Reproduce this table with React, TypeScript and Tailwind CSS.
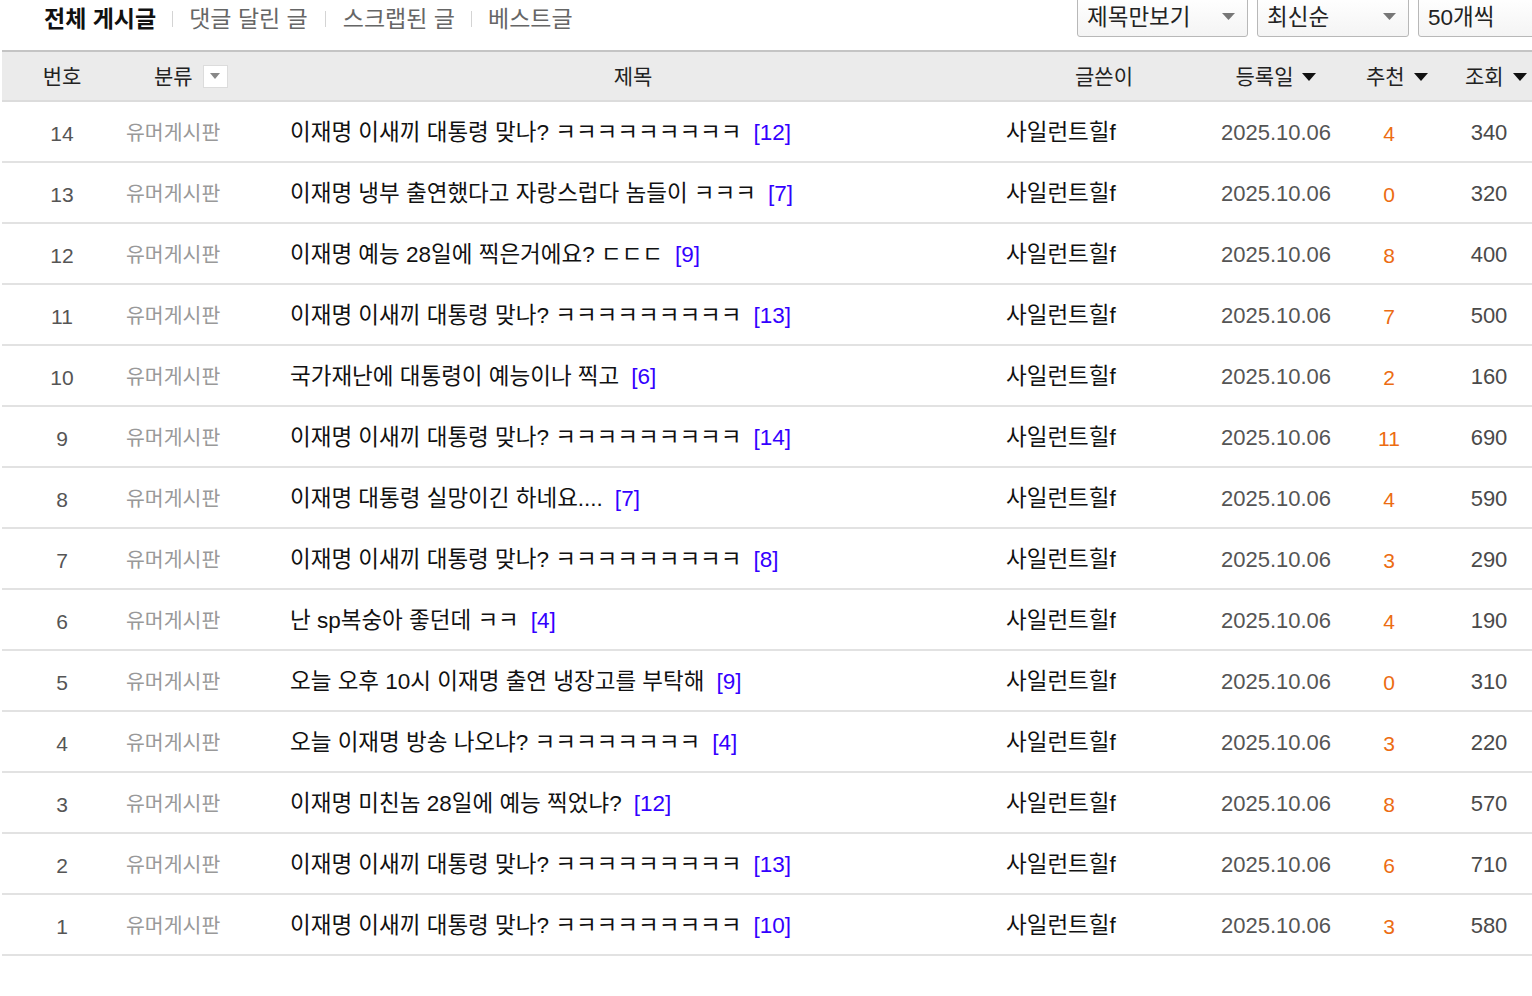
import React from "react";

type Post = { no: number; title: string; comments: number; likes: number; views: number };

const posts: Post[] = [
	{ no: 14, title: "이재명 이새끼 대통령 맞나? ㅋㅋㅋㅋㅋㅋㅋㅋㅋ", comments: 12, likes: 4, views: 340 },
	{ no: 13, title: "이재명 냉부 출연했다고 자랑스럽다 놈들이 ㅋㅋㅋ", comments: 7, likes: 0, views: 320 },
	{ no: 12, title: "이재명 예능 28일에 찍은거에요? ㄷㄷㄷ", comments: 9, likes: 8, views: 400 },
	{ no: 11, title: "이재명 이새끼 대통령 맞나? ㅋㅋㅋㅋㅋㅋㅋㅋㅋ", comments: 13, likes: 7, views: 500 },
	{ no: 10, title: "국가재난에 대통령이 예능이나 찍고", comments: 6, likes: 2, views: 160 },
	{ no: 9, title: "이재명 이새끼 대통령 맞나? ㅋㅋㅋㅋㅋㅋㅋㅋㅋ", comments: 14, likes: 11, views: 690 },
	{ no: 8, title: "이재명 대통령 실망이긴 하네요....", comments: 7, likes: 4, views: 590 },
	{ no: 7, title: "이재명 이새끼 대통령 맞나? ㅋㅋㅋㅋㅋㅋㅋㅋㅋ", comments: 8, likes: 3, views: 290 },
	{ no: 6, title: "난 sp복숭아 좋던데 ㅋㅋ", comments: 4, likes: 4, views: 190 },
	{ no: 5, title: "오늘 오후 10시 이재명 출연 냉장고를 부탁해", comments: 9, likes: 0, views: 310 },
	{ no: 4, title: "오늘 이재명 방송 나오냐? ㅋㅋㅋㅋㅋㅋㅋㅋ", comments: 4, likes: 3, views: 220 },
	{ no: 3, title: "이재명 미친놈 28일에 예능 찍었냐?", comments: 12, likes: 8, views: 570 },
	{ no: 2, title: "이재명 이새끼 대통령 맞나? ㅋㅋㅋㅋㅋㅋㅋㅋㅋ", comments: 13, likes: 6, views: 710 },
	{ no: 1, title: "이재명 이새끼 대통령 맞나? ㅋㅋㅋㅋㅋㅋㅋㅋㅋ", comments: 10, likes: 3, views: 580 },
];

const cols = "grid grid-cols-[120px_108px_776px_190px_160px_66px_134px]";

function SortArrow() {
	return (
		<svg width="14" height="8" viewBox="0 0 14 8" className="ml-[9px] mt-[2px] shrink-0">
			<path d="M0 0h14L7 8z" fill="#111" />
		</svg>
	);
}

function GrayArrow() {
	return (
		<svg width="13" height="7" viewBox="0 0 13 7">
			<path d="M0 0h13L6.5 7z" fill="#777" />
		</svg>
	);
}

function Select({ label, width }: { label: string; width: string }) {
	return (
		<div
			className={`${width} h-[41px] -mt-[4px] shrink-0 flex items-center justify-between pl-[9px] pr-[12px] border border-[#b8b8b8] rounded-b-[3px] bg-gradient-to-b from-white to-[#f4f4f4] text-[22.5px] text-[#222]`}
		>
			<span className="pt-[2px]">{label}</span>
			<GrayArrow />
		</div>
	);
}

export default function App() {
	return (
		<main className="w-full h-[996px] overflow-hidden bg-white text-[#222] font-['Liberation_Sans','Noto_Sans_CJK_KR',sans-serif]">
			<div className="w-[1556px] ml-[2px]">
				<div className="flex items-start h-[50px]">
					<nav className="flex items-center h-[38px] pl-[42px] text-[23px] leading-none">
						<span className="font-bold text-[#111]">전체 게시글</span>
						<span className="mx-[16px] w-px h-[16px] bg-[#d4d4d4]" />
						<span className="text-[#666]">댓글 달린 글</span>
						<span className="mx-[17px] w-px h-[16px] bg-[#d4d4d4]" />
						<span className="text-[#666]">스크랩된 글</span>
						<span className="mx-[16px] w-px h-[16px] bg-[#d4d4d4]" />
						<span className="text-[#666]">베스트글</span>
					</nav>
					<div className="ml-auto flex gap-[9px] pl-[20px]">
						<Select label="제목만보기" width="w-[171px]" />
						<Select label="최신순" width="w-[152px]" />
						<Select label="50개씩" width="w-[140px]" />
					</div>
				</div>

				<div className={`${cols} h-[52px] items-center bg-[#ebebeb] border-t-2 border-t-[#c4c4c4] border-b-2 border-b-[#dcdcdc] text-[21px] leading-none text-[#222] whitespace-nowrap`}>
					<div className="text-center">번호</div>
					<div className="flex items-center pl-[32px]">
						<span>분류</span>
						<span className="ml-[10px] w-[25px] h-[23px] bg-white border border-[#dcdcdc] flex items-center justify-center">
							<svg width="10" height="6" viewBox="0 0 10 6">
								<path d="M0 0h10L5 6z" fill="#888" />
							</svg>
						</span>
					</div>
					<div className="text-center pl-[30px]">제목</div>
					<div className="pl-[69px]">글쓴이</div>
					<div className="flex items-center justify-center">
						<span>등록일</span>
						<SortArrow />
					</div>
					<div className="flex items-center pl-[10px]">
						<span>추천</span>
						<SortArrow />
					</div>
					<div className="flex items-center pl-[43px]">
						<span>조회</span>
						<SortArrow />
					</div>
				</div>

				{posts.map((p) => (
					<div key={p.no} className={`${cols} h-[61px] pt-[3px] items-center border-b-2 border-b-[#e2e2e2] leading-none whitespace-nowrap`}>
						<div className="text-center text-[21px] text-[#555]">{p.no}</div>
						<div className="pl-[4px] text-[20.5px] text-[#999]">유머게시판</div>
						<div className="pl-[60px] text-[22.5px] text-[#111]">
							{p.title}
							<span className="ml-[12px] text-[#3300ff]">[{p.comments}]</span>
						</div>
						<div className="text-[22.5px] text-[#111]">사일런트힐f</div>
						<div className="text-center text-[22px] text-[#555]">2025.10.06</div>
						<div className="text-center text-[21px] text-[#ec6c12]">{p.likes}</div>
						<div className="text-center text-[22px] text-[#4a4a4a]">{p.views}</div>
					</div>
				))}
			</div>
		</main>
	);
}
